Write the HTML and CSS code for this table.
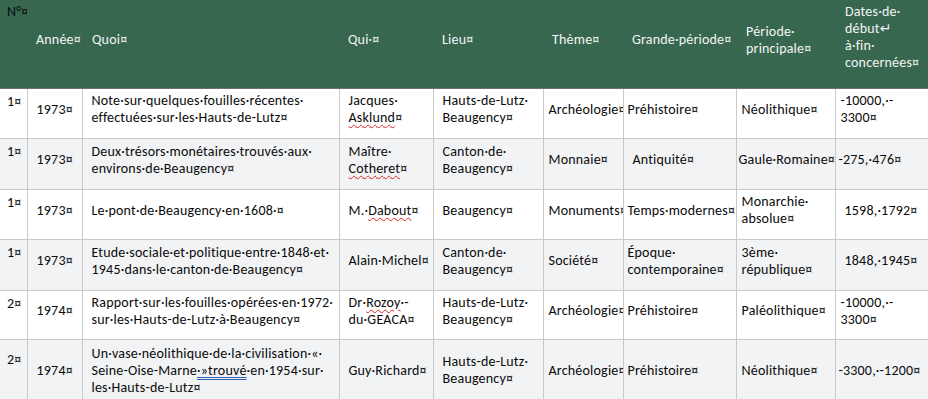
FILE: index.html
```html
<!DOCTYPE html>
<html lang="fr">
<head>
<meta charset="utf-8">
<title>Publications</title>
<link rel="stylesheet" href="styles.css">
</head>
<body>
<table class="grid">
  <colgroup>
    <col class="w1"><col class="w2"><col class="w3"><col class="w4"><col class="w5"><col class="w6"><col class="w7"><col class="w8"><col class="w9">
  </colgroup>
  <thead>
    <tr>
      <th class="n">N°¤</th>
      <th class="c2">Année¤</th>
      <th class="c3">Quoi¤</th>
      <th class="c4">Qui·¤</th>
      <th class="c5">Lieu¤</th>
      <th class="c6">Thème¤</th>
      <th class="c7">Grande·période¤</th>
      <th class="c8">Période·<br>principale¤</th>
      <th class="c9 dates">Dates·de·<br>début↵<br>à·fin·<br>concernées¤</th>
    </tr>
  </thead>
  <tbody>
    <tr class="r1">
      <td class="n">1¤</td>
      <td class="c2">1973¤</td>
      <td class="c3">Note·sur·quelques·fouilles·récentes·<br>effectuées·sur·les·Hauts-de-Lutz¤</td>
      <td class="c4">Jacques·<br><span class="sp">Asklund</span>¤</td>
      <td class="c5">Hauts-de-Lutz·<br>Beaugency¤</td>
      <td class="c6">Archéologie¤</td>
      <td class="c7">Préhistoire¤</td>
      <td class="c8">Néolithique¤</td>
      <td class="c9">-10000,·-<br>3300¤</td>
    </tr>
    <tr class="r2 alt">
      <td class="n">1¤</td>
      <td class="c2">1973¤</td>
      <td class="c3">Deux·trésors·monétaires·trouvés·aux·<br>environs·de·Beaugency¤</td>
      <td class="c4">Maître·<br><span class="sp">Cotheret</span>¤</td>
      <td class="c5">Canton·de·<br>Beaugency¤</td>
      <td class="c6">Monnaie¤</td>
      <td class="c7 wide">Antiquité¤</td>
      <td class="c8 tight">Gaule·Romaine¤</td>
      <td class="c9 tight">-275,·476¤</td>
    </tr>
    <tr class="r3">
      <td class="n">1¤</td>
      <td class="c2">1973¤</td>
      <td class="c3">Le·pont·de·Beaugency·en·1608·¤</td>
      <td class="c4">M.·<span class="sp">Dabout</span>¤</td>
      <td class="c5">Beaugency¤</td>
      <td class="c6">Monuments¤</td>
      <td class="c7">Temps·modernes¤</td>
      <td class="c8">Monarchie·<br>absolue¤</td>
      <td class="c9 wide">1598,·1792¤</td>
    </tr>
    <tr class="r4 alt">
      <td class="n">1¤</td>
      <td class="c2">1973¤</td>
      <td class="c3">Etude·sociale·et·politique·entre·1848·et·<br>1945·dans·le·canton·de·Beaugency¤</td>
      <td class="c4">Alain·Michel¤</td>
      <td class="c5">Canton·de·<br>Beaugency¤</td>
      <td class="c6">Société¤</td>
      <td class="c7">Époque·<br>contemporaine¤</td>
      <td class="c8">3ème·<br>république¤</td>
      <td class="c9 wide">1848,·1945¤</td>
    </tr>
    <tr class="r5">
      <td class="n">2¤</td>
      <td class="c2">1974¤</td>
      <td class="c3">Rapport·sur·les·fouilles·opérées·en·1972·<br>sur·les·Hauts-de-Lutz·à·Beaugency¤</td>
      <td class="c4">Dr·<span class="sp">Rozoy</span>·-<br>du·GEACA¤</td>
      <td class="c5">Hauts-de-Lutz·<br>Beaugency¤</td>
      <td class="c6">Archéologie¤</td>
      <td class="c7">Préhistoire¤</td>
      <td class="c8">Paléolithique¤</td>
      <td class="c9">-10000,·-<br>3300¤</td>
    </tr>
    <tr class="r6 alt">
      <td class="n">2¤</td>
      <td class="c2">1974¤</td>
      <td class="c3">Un·vase·néolithique·de·la·civilisation·«·<br>Seine-Oise-Marne<span class="gr">·»trouvé</span>·en·1954·sur·<br>les·Hauts-de-Lutz¤</td>
      <td class="c4">Guy·Richard¤</td>
      <td class="c5">Hauts-de-Lutz·<br>Beaugency¤</td>
      <td class="c6">Archéologie¤</td>
      <td class="c7">Préhistoire¤</td>
      <td class="c8">Néolithique¤</td>
      <td class="c9 tight">-3300,·-1200¤</td>
    </tr>
  </tbody>
</table>
</body>
</html>
```

FILE: styles.css
```css
html, body {
  margin: 0;
  padding: 0;
  background: #ffffff;
  overflow: hidden;
}

.grid {
  border-collapse: collapse;
  table-layout: fixed;
  width: 936px;
  font-family: Carlito, Lato, "DejaVu Sans", sans-serif;
  font-size: 14px;
  letter-spacing: 0.2px;
  line-height: 17px;
  color: #0a0a0a;
}

.w1 { width: 27px; }
.w2 { width: 55px; }
.w3 { width: 257px; }
.w4 { width: 94px; }
.w5 { width: 110px; }
.w6 { width: 80px; }
.w7 { width: 113px; }
.w8 { width: 99px; }
.w9 { width: 101px; }

th, td {
  white-space: nowrap;
  overflow: hidden;
  text-align: left;
  font-weight: normal;
  vertical-align: middle;
  padding: 3px 0 11px 9px;
}

thead tr {
  height: 88px;
  background: #37674f;
}

thead th {
  color: #f4f4f4;
  border-bottom: 1px solid #6f6f6f;
}

thead th.n {
  color: #0a0a0a;
  vertical-align: top;
  padding: 3px 0 0 7px;
}

thead th.c3 { padding-left: 10px; }
thead th.c8 { padding-left: 10px; }
thead th.c9 { padding-left: 10px; }
thead th.dates { padding-bottom: 16px; }

tbody tr { height: 50px; }
tbody tr.r2, tbody tr.r4 { height: 51px; }
tbody tr.r5 { height: 49px; }
tbody tr.r6 { height: 70px; }

tbody tr.alt { background: #f2f3f5; }

tbody td {
  border: 1px solid #c9c9c9;
}

tbody td.n {
  border-left: none;
  vertical-align: top;
  padding: 4px 0 0 7px;
}

tbody tr.r6 td.n { padding-top: 11px; }

tbody td.c3 { padding-left: 9px; }
tbody td.c6 { padding-left: 5px; }
tbody td.c7 { padding-left: 4px; }
tbody td.c8 { padding-left: 5px; }
tbody td.c9 { padding-left: 5px; }
tbody td.c7.wide { padding-left: 9px; }
tbody td.c8.tight { padding-left: 2px; }
tbody td.c9.tight { padding-left: 3px; }
tbody td.c9.wide { padding-left: 9px; }

.sp {
  text-decoration: underline wavy #e02020;
  text-decoration-thickness: 1px;
  text-underline-offset: 2px;
}

.gr {
  text-decoration: underline double #2f5fb0;
  text-decoration-thickness: 1px;
  text-underline-offset: 2px;
}
```
